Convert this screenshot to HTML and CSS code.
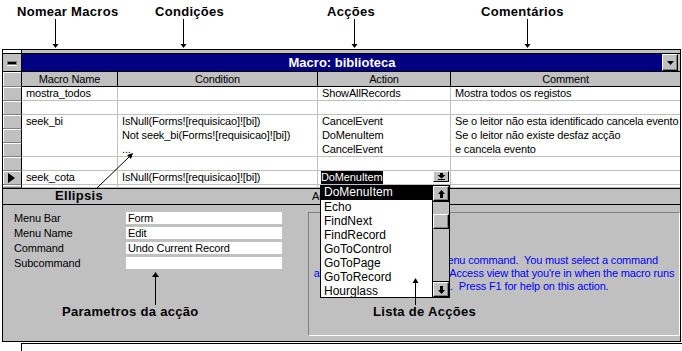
FILE: index.html
```html
<!DOCTYPE html>
<html lang="pt">
<head>
  <meta charset="UTF-8">
  <title>Macro: biblioteca</title>
  <link rel="stylesheet" href="styles.css">
</head>
<body>
  <div class="page">

    <div class="callouts">
      <span class="callout">Nomear Macros</span>
      <span class="callout">Condições</span>
      <span class="callout">Acções</span>
      <span class="callout">Comentários</span>
    </div>

    <div class="window">
      <div class="strip">
        <div class="strip-left"></div>
        <div class="strip-right"></div>
      </div>

      <div class="titlebar">
        <div class="ctrl-box"><div class="ctrl-minus"></div></div>
        <div class="title">Macro: biblioteca</div>
        <div class="title-btn">
          <svg width="7" height="4" viewBox="0 0 7 4"><path d="M0 0h7L3.5 4z" fill="#000"/></svg>
        </div>
        <div class="title-end"></div>
      </div>

      <div class="grid">
        <div class="hd sel"></div>
        <div class="hd">Macro Name</div>
        <div class="hd">Condition</div>
        <div class="hd">Action</div>
        <div class="hd last">Comment</div>

        <div class="sel"></div>
        <div class="cell">mostra_todos</div>
        <div class="cell"></div>
        <div class="cell">ShowAllRecords</div>
        <div class="cell last">Mostra todos os registos</div>

        <div class="sel"></div>
        <div class="cell"></div>
        <div class="cell"></div>
        <div class="cell"></div>
        <div class="cell last"></div>

        <div class="sel"></div>
        <div class="cell flat">seek_bi</div>
        <div class="cell flat">IsNull(Forms![requisicao]![bi])</div>
        <div class="cell flat">CancelEvent</div>
        <div class="cell flat last">Se o leitor não esta identificado cancela evento</div>

        <div class="sel"></div>
        <div class="cell flat"></div>
        <div class="cell flat">Not seek_bi(Forms![requisicao]![bi])</div>
        <div class="cell flat">DoMenuItem</div>
        <div class="cell flat last">Se o leitor não existe desfaz acção</div>

        <div class="sel"></div>
        <div class="cell"></div>
        <div class="cell">...</div>
        <div class="cell">CancelEvent</div>
        <div class="cell last">e cancela evento</div>

        <div class="sel"></div>
        <div class="cell"></div>
        <div class="cell"></div>
        <div class="cell"></div>
        <div class="cell last"></div>

        <div class="sel current">
          <svg width="7" height="10" viewBox="0 0 7 10"><path d="M0 0l7 5-7 5z" fill="#000"/></svg>
        </div>
        <div class="cell">seek_cota</div>
        <div class="cell">IsNull(Forms![requisicao]![bi])</div>
        <div class="cell editing">
          <span class="picked">DoMenuItem</span>
          <span class="combo-btn">
            <svg width="9" height="7" viewBox="0 0 9 7"><path d="M3 0h3v2h2.5L4.5 5.5 0.5 2H3z" fill="#000"/><rect x="1" y="6" width="7" height="1" fill="#000"/></svg>
          </span>
        </div>
        <div class="cell last"></div>

        <div class="sel"></div>
        <div class="cell"></div>
        <div class="cell"></div>
        <div class="cell"></div>
        <div class="cell last"></div>
      </div>

      <div class="band">
        <div class="band-left">Ellipsis</div>
        <div class="band-right">Action Arguments</div>
      </div>

      <div class="pane">
        <div class="args">
          <div class="arg"><span class="arg-label">Menu Bar</span><span class="arg-field">Form</span></div>
          <div class="arg"><span class="arg-label">Menu Name</span><span class="arg-field">Edit</span></div>
          <div class="arg"><span class="arg-label">Command</span><span class="arg-field">Undo Current Record</span></div>
          <div class="arg"><span class="arg-label">Subcommand</span><span class="arg-field"></span></div>
          <svg class="param-arrow" width="7" height="33" viewBox="0 0 7 33">
            <path d="M3.5 0L7 5H0z" fill="#000"/>
            <rect x="3" y="4" width="1" height="29" fill="#000"/>
          </svg>
          <div class="note">Parametros da acção</div>
        </div>
        <div class="desc">
          <p>Carries out a standard menu command.&nbsp; You must select a command<br>
          appropriate for the Microsoft Access view that you're in when the macro runs<br>
          or it won't work.&nbsp; Press F1 for help on this action.</p>
        </div>
      </div>
    </div>

    <div class="below"></div>

    <div class="action-list">
      <div class="list-items">
        <div class="item chosen">DoMenuItem</div>
        <div class="item">Echo</div>
        <div class="item">FindNext</div>
        <div class="item">FindRecord</div>
        <div class="item">GoToControl</div>
        <div class="item">GoToPage</div>
        <div class="item">GoToRecord</div>
        <div class="item">Hourglass</div>
      </div>
      <div class="scrollbar">
        <div class="sb-btn">
          <svg width="7" height="8" viewBox="0 0 7 8"><path d="M3.5 0L7 4H5v4H2V4H0z" fill="#000"/></svg>
        </div>
        <div class="sb-track">
          <div class="sb-thumb"></div>
        </div>
        <div class="sb-btn">
          <svg width="7" height="8" viewBox="0 0 7 8"><path d="M2 0h3v4h2L3.5 8 0 4h2z" fill="#000"/></svg>
        </div>
      </div>
    </div>

    <div class="list-note">Lista de Acções</div>

    <svg class="arrows" width="682" height="351" viewBox="0 0 682 351">
      <g stroke="#000" stroke-width="1" fill="none">
        <line x1="55.5" y1="19" x2="55.5" y2="45"/>
        <line x1="183.5" y1="19" x2="183.5" y2="45"/>
        <line x1="354.5" y1="19" x2="354.5" y2="45"/>
        <line x1="527.5" y1="19" x2="527.5" y2="45"/>
        <line x1="97" y1="188" x2="130" y2="156"/>
        <line x1="415.5" y1="282" x2="415.5" y2="305"/>
      </g>
      <g fill="#000">
        <path d="M52.5 44h6l-3 4z"/>
        <path d="M180.5 44h6l-3 4z"/>
        <path d="M351.5 44h6l-3 4z"/>
        <path d="M524.5 44h6l-3 4z"/>
        <path d="M133 153l-2 6-4-4z"/>
        <path d="M412.5 283h6l-3-5z"/>
      </g>
    </svg>
  </div>
</body>
</html>
```

FILE: styles.css
```css
body, html {
  margin: 0;
  padding: 0;
  background-color: #ffffff;
}

.page {
  position: relative;
  width: 682px;
  height: 351px;
  overflow: hidden;
  font-family: "Liberation Sans", Arial, sans-serif;
  font-size: 11px;
  letter-spacing: -0.15px;
  color: #000;
}

/* Callouts above the window */
.callouts {
  display: grid;
  grid-template-columns: 138px 172px 154px 1fr;
  height: 49px;
  padding: 4px 0 0 17px;
  box-sizing: border-box;
}

.callout,
.band-left,
.note,
.list-note {
  font-weight: bold;
  font-size: 13px;
  letter-spacing: 0.3px;
  line-height: 15px;
}

/* Macro window */
.window {
  margin-left: 2px;
  width: 679px;
  border: 1px solid #000;
  box-sizing: border-box;
  background-color: #c0c0c0;
}

.strip {
  display: flex;
  height: 4px;
  border-bottom: 1px solid #000;
  box-sizing: border-box;
}

.strip-left {
  width: 19px;
  background-color: #ffffff;
  border-right: 1px solid #000;
  box-sizing: border-box;
}

.strip-right {
  flex: 1;
  background-color: #c0c0c0;
}

.titlebar {
  display: flex;
  height: 18px;
  border-bottom: 1px solid #000;
  box-sizing: border-box;
}

.ctrl-box {
  width: 19px;
  background-color: #c0c0c0;
  border-right: 1px solid #000;
  box-sizing: border-box;
  display: flex;
  align-items: center;
  justify-content: center;
}

.ctrl-minus {
  width: 8px;
  height: 2px;
  background-color: #000;
  border: 1px solid #808080;
  box-shadow: 0 1px 0 #fff;
}

.title {
  width: 640px;
  background-color: #000080;
  color: #ffffff;
  text-align: center;
  font-weight: bold;
  font-size: 13px;
  letter-spacing: 0;
  line-height: 17px;
}

.title-btn {
  width: 16px;
  background-color: #c0c0c0;
  border-top: 1px solid #fff;
  border-left: 1px solid #fff;
  border-right: 1px solid #000;
  border-bottom: 1px solid #000;
  box-shadow: inset -1px -1px 0 #808080;
  box-sizing: border-box;
  display: flex;
  align-items: center;
  justify-content: center;
}

.title-end {
  flex: 1;
}

/* Macro grid */
.grid {
  display: grid;
  grid-template-columns: 19px 96px 200px 133px 229px;
  grid-template-rows: 15px repeat(7, 14px) 3px;
  border-bottom: 1px solid #000;
  background-color: #ffffff;
}

.grid > div {
  box-sizing: border-box;
  overflow: hidden;
  white-space: nowrap;
}

.hd {
  background-color: #c0c0c0;
  border-right: 1px solid #000;
  border-bottom: 1px solid #000;
  text-align: center;
  line-height: 14px;
}

.sel {
  background-color: #c0c0c0;
  border-right: 1px solid #000;
  border-bottom: 1px solid #808080;
  box-shadow: inset 1px 1px 0 #ffffff;
}

.sel.current {
  display: flex;
  align-items: center;
  padding-left: 5px;
}

.cell {
  border-right: 1px solid #c0c0c0;
  border-bottom: 1px solid #c0c0c0;
  padding-left: 4px;
  line-height: 13px;
}

.cell.flat {
  border-bottom-color: #ffffff;
}

.hd.last,
.cell.last {
  border-right: none;
}

.cell.editing {
  display: flex;
  justify-content: space-between;
  padding-left: 3px;
  padding-right: 1px;
}

.picked {
  background-color: #000;
  color: #fff;
  padding-right: 1px;
}

.combo-btn {
  width: 16px;
  height: 11px;
  background-color: #c0c0c0;
  border-top: 1px solid #fff;
  border-left: 1px solid #fff;
  border-right: 1px solid #000;
  border-bottom: 1px solid #000;
  box-sizing: border-box;
  display: flex;
  align-items: center;
  justify-content: center;
}

/* Lower pane */
.band {
  display: grid;
  grid-template-columns: 305px 1fr;
  height: 16px;
  border-bottom: 1px solid #000;
  box-sizing: border-box;
}

.band-left {
  padding-left: 52px;
  line-height: 14px;
}

.band-right {
  padding-left: 4px;
  line-height: 15px;
}

.pane {
  display: flex;
  height: 136px;
}

.args {
  width: 305px;
  flex-shrink: 0;
  padding: 7px 0 0 11px;
  box-sizing: border-box;
}

.arg {
  display: flex;
  height: 12px;
  margin-bottom: 3px;
  line-height: 12px;
}

.arg-label {
  width: 112px;
}

.arg-field {
  width: 156px;
  background-color: #ffffff;
  padding-left: 2px;
  box-sizing: border-box;
}

.param-arrow {
  display: block;
  margin-left: 138px;
}

.note {
  padding-left: 48px;
  line-height: 14px;
}

.desc {
  flex: 1;
  min-width: 0;
  overflow: hidden;
  margin: 7px 0 5px 0;
  border-top: 1px solid #808080;
  border-left: 1px solid #808080;
  border-bottom: 1px solid #ffffff;
  border-right: 1px solid #ffffff;
  box-sizing: border-box;
}

.desc p {
  margin: 0;
  padding-top: 41px;
  text-align: center;
  color: #0000ff;
  line-height: 13px;
  white-space: nowrap;
}

.below {
  margin-top: 1px;
  margin-left: 21px;
  height: 9px;
  border-top: 1px solid #000;
  border-left: 1px solid #000;
}

/* Drop-down action list */
.action-list {
  position: absolute;
  left: 320px;
  top: 185px;
  width: 130px;
  height: 113px;
  display: flex;
  background-color: #ffffff;
  border: 1px solid #000;
  box-sizing: border-box;
  z-index: 5;
  font-size: 12px;
  letter-spacing: 0;
}

.list-items {
  flex: 1;
}

.item {
  height: 14px;
  line-height: 14px;
  padding-left: 3px;
}

.item.chosen {
  background-color: #000;
  color: #fff;
  margin-top: -1px;
  margin-left: -1px;
  padding-left: 4px;
  height: 15px;
}

.scrollbar {
  width: 16px;
  display: flex;
  flex-direction: column;
  background-color: #c0c0c0;
  border-left: 1px solid #000;
}

.sb-btn,
.sb-thumb {
  height: 15px;
  background-color: #c0c0c0;
  border-top: 1px solid #fff;
  border-left: 1px solid #fff;
  border-right: 1px solid #000;
  border-bottom: 1px solid #000;
  box-shadow: inset -1px -1px 0 #808080;
  box-sizing: border-box;
  display: flex;
  align-items: center;
  justify-content: center;
}

.sb-track {
  flex: 1;
  padding-top: 12px;
  border-top: 1px solid #000;
  border-bottom: 1px solid #000;
}

.list-note {
  position: absolute;
  left: 373px;
  top: 305px;
  line-height: 14px;
  z-index: 6;
}

.arrows {
  position: absolute;
  left: 0;
  top: 0;
  pointer-events: none;
  z-index: 7;
}
```
